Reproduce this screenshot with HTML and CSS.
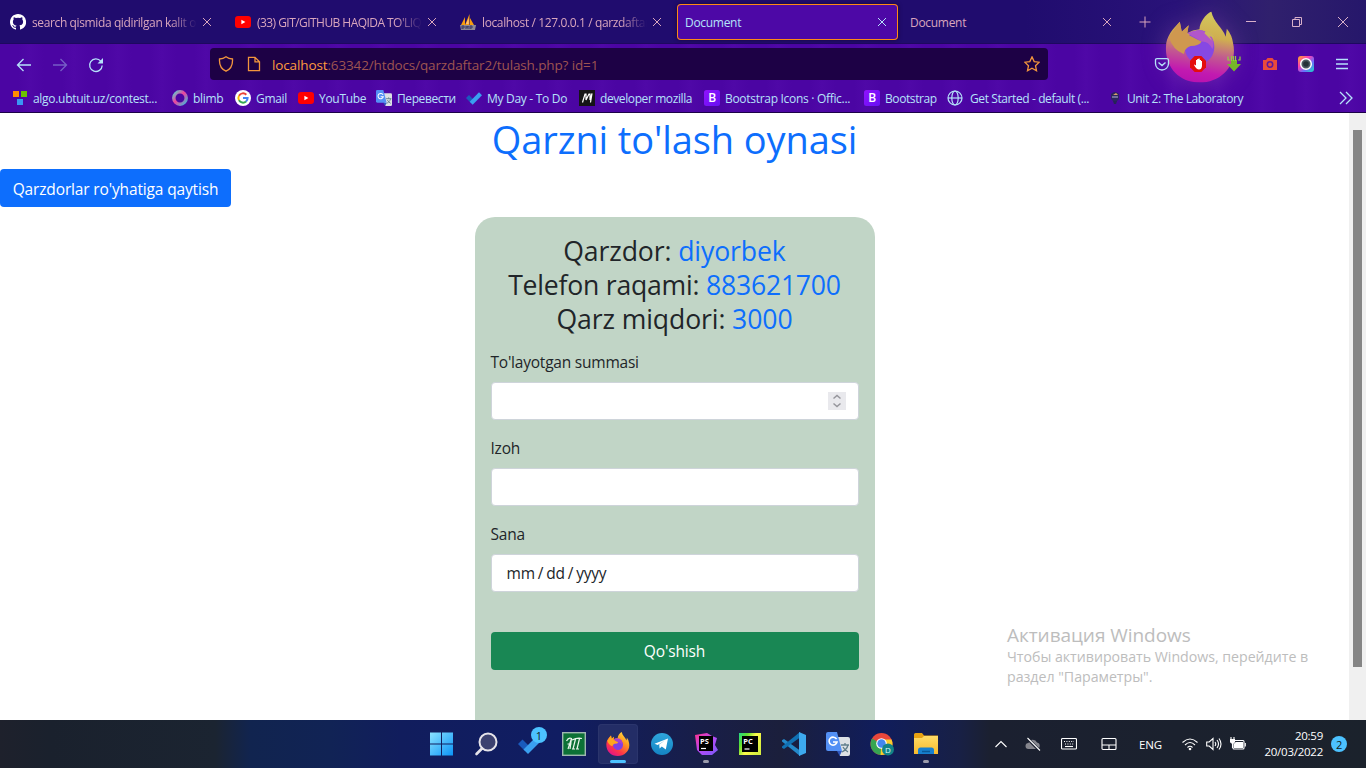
FILE: index.html
```html
<!DOCTYPE html>
<html lang="uz">
<head>
<meta charset="utf-8">
<title>Document</title>
<link rel="stylesheet" href="styles.css">
</head>
<body>
<svg class="defs" width="0" height="0">
  <defs>
    <linearGradient id="fxBody" x1="1" y1="0" x2=".3" y2="1"><stop offset="0" stop-color="#fff44f"/><stop offset=".4" stop-color="#ff9a1f"/><stop offset=".75" stop-color="#ff3647"/><stop offset="1" stop-color="#e31587"/></linearGradient>
    <linearGradient id="fxDim" x1=".6" y1="0" x2=".45" y2="1"><stop offset="0" stop-color="#d3c95d"/><stop offset=".35" stop-color="#cfae50"/><stop offset=".6" stop-color="#c25a90"/><stop offset=".85" stop-color="#c21ab0"/><stop offset="1" stop-color="#b812b0"/></linearGradient>
    <linearGradient id="ring" x1="0" y1="0" x2="1" y2="1"><stop offset="0" stop-color="#5ad0d0"/><stop offset=".45" stop-color="#f0409c"/><stop offset="1" stop-color="#40b8d8"/></linearGradient>
    <linearGradient id="bs" x1="0" y1="0" x2="1" y2="1"><stop offset="0" stop-color="#9013fe"/><stop offset="1" stop-color="#6610f2"/></linearGradient>
    <linearGradient id="win" x1="0" y1="0" x2="1" y2="1"><stop offset="0" stop-color="#8be2ff"/><stop offset="1" stop-color="#0b94f7"/></linearGradient>
    <linearGradient id="ps" x1="0" y1="0" x2="1" y2="1"><stop offset="0" stop-color="#ff318c"/><stop offset=".5" stop-color="#b74af7"/><stop offset="1" stop-color="#765af8"/></linearGradient>
    <linearGradient id="pc" x1="0" y1="0" x2="1" y2=".6"><stop offset="0" stop-color="#21d789"/><stop offset=".3" stop-color="#60e030"/><stop offset=".6" stop-color="#fcf84a"/><stop offset="1" stop-color="#d8ee40"/></linearGradient>
    <linearGradient id="tg" x1="0" y1="0" x2="0" y2="1"><stop offset="0" stop-color="#2fa6dc"/><stop offset="1" stop-color="#1484c4"/></linearGradient>
    <linearGradient id="folder" x1="0" y1="0" x2="0" y2="1"><stop offset="0" stop-color="#ffdc66"/><stop offset="1" stop-color="#f8b92c"/></linearGradient>
    <linearGradient id="rainbow" x1="0" y1="0" x2="1" y2="1"><stop offset="0" stop-color="#ffb020"/><stop offset=".35" stop-color="#ff3fb0"/><stop offset=".65" stop-color="#6a6cff"/><stop offset="1" stop-color="#18e0c0"/></linearGradient>
    <symbol id="x" viewBox="0 0 10 10"><path d="M1 1l8 8M9 1L1 9" fill="none" stroke="currentColor" stroke-width="1"/></symbol>
    <symbol id="yt" viewBox="0 0 16 12"><rect width="16" height="12" rx="3" fill="#f00"/><path d="M6.4 3.7L10.4 6 6.4 8.3z" fill="#fff"/></symbol>
    <symbol id="boot" viewBox="0 0 16 16"><rect width="16" height="16" rx="2.5" fill="url(#bs)"/><text x="8" y="12.4" text-anchor="middle" font-family="Open Sans, sans-serif" font-weight="600" font-size="12" fill="#fff">B</text></symbol>
    <symbol id="check" viewBox="0 0 24 20"><path d="M0 10l4.5-4.5 7 7L7 17z" fill="#195abd"/><path d="M5.5 15.500L19.500 1.500 24 6 10 20z" fill="#3a9ff0"/></symbol>
    <symbol id="fox" viewBox="0 0 72 72"><path d="M15 10.500L17 20.500 24 14 22.500 22Q28 18.500 35 18C35 11 41 3 47 0 49 11 59 17 61.500 25.500L62.700 17.500Q68 24 69 32C74 53 58 72 35 72 14 72 0 56 1 36 1 25 8 18 15 10.500z"/></symbol>
    <symbol id="foxFace" viewBox="0 0 72 72"><path d="M15 10.500L17 20.500 24 14 22.500 23Q28 26 37 30.500 35 35 26 35 20 37 19 43 8 39 4 26 9 18 15 10.500z"/></symbol>
    <symbol id="translate" viewBox="0 0 24 24"><path d="M10 5h12a2 2 0 012 2v15a2 2 0 01-2 2h-8z" fill="#dce0e5"/><path d="M15 13h8M19 11v2M22 13c-1 4-4 6-6 7M17 15c1 2 3 4 5 5" fill="none" stroke="#607d8b" stroke-width="1.3"/><path d="M11 19h5l-2.400 5z" fill="#3057bc"/><path d="M2 0h9l5 19H2a2 2 0 01-2-2V2a2 2 0 012-2z" fill="#5390f5"/><path d="M10.600 7.200A4 4 0 1011 10H7" fill="none" stroke="#fff" stroke-width="1.600"/></symbol>
  </defs>
</svg>

<header class="browser">
  <nav class="tabs">
    <div class="tab"><svg class="ico" viewBox="0 0 16 16" fill="#fff"><path d="M8 0C3.6 0 0 3.6 0 8c0 3.5 2.3 6.5 5.5 7.6.4.1.5-.2.5-.4v-1.5c-2.2.5-2.7-.9-2.7-.9-.4-.9-.9-1.2-.9-1.2-.7-.5.1-.5.1-.5.8.1 1.2.8 1.2.8.7 1.2 1.9.9 2.3.7.1-.5.3-.9.5-1.1-1.8-.2-3.6-.9-3.6-4 0-.9.3-1.6.8-2.1-.1-.2-.4-1 .1-2.1 0 0 .7-.2 2.2.8a7.6 7.6 0 014 0c1.5-1 2.2-.8 2.2-.8.4 1.1.2 1.9.1 2.1.5.6.8 1.300.8 2.100 0 3.100-1.900 3.700-3.700 3.900.3.300.6.800.6 1.500v2.300c0 .2.100.5.600.4A8 8 0 008 0z"/></svg><span class="tab-name fade">search qismida qidirilgan kalit or</span><svg class="close"><use href="#x"/></svg></div>
    <div class="tab"><svg class="ico"><use href="#yt" y="0" width="16" height="16"/></svg><span class="tab-name fade git">(33) GIT/GITHUB HAQIDA TO'LIQ</span><svg class="close"><use href="#x"/></svg></div>
    <div class="tab"><svg class="ico" viewBox="0 0 16 16"><path d="M1 11L5 3v8zM5 11L9.500 0v11zM10 11V4l4 7z" fill="#f89c0e"/><path d="M6 10l2.700-6v6zM2 10l2-4z" fill="#ffc27a"/><path d="M0 11h16l-1 5H1z" fill="#8b8796"/><path d="M2 15v-3h2v2H2m4 1v-3m0 1h2v-1 3m2 0v-3h2v2h-2" stroke="#383866" fill="none"/></svg><span class="tab-name fade">localhost / 127.0.0.1 / qarzdaftar</span><svg class="close"><use href="#x"/></svg></div>
    <div class="tab active"><span class="tab-name">Document</span><svg class="close"><use href="#x"/></svg></div>
    <div class="tab"><span class="tab-name">Document</span><svg class="close"><use href="#x"/></svg></div>
    <svg class="plus" viewBox="0 0 12 12"><path d="M6 .5v11M.5 6h11" stroke="currentColor"/></svg>
    <div class="window-buttons">
      <svg viewBox="0 0 12 12"><path d="M1 5.500h10"/></svg>
      <svg viewBox="0 0 12 12"><path d="M1.500 3.500h7v7h-7zM4 3V1.500h6.500v7H9"/></svg>
      <svg viewBox="0 0 12 12"><path d="M1 1l10 10M11 1L1 11"/></svg>
    </div>
  </nav>
  <svg class="mascot" viewBox="0 0 72 72"><use href="#fox" fill="url(#fxDim)"/><ellipse cx="35" cy="36" rx="15" ry="17" fill="#8648e3"/><path d="M22.500 22Q37 15 47 25 51 33 48 38 44 30 37 30.500z" fill="#b156ca"/><use href="#foxFace" fill="#cf984f"/><path d="M41 20q5-1 9 6l-5-1 3 5-8-8z" fill="#cdb45a"/></svg>
  <div class="toolbar">
    <div class="nav-buttons">
      <svg viewBox="0 0 16 16"><path d="M15 8H1.500M7.500 2l-6 6 6 6"/></svg>
      <svg class="off" viewBox="0 0 16 16"><path d="M1 8h13.500M8.500 2l6 6-6 6"/></svg>
      <svg viewBox="0 0 16 16"><path d="M14.200 8.500A6.300 6.300 0 1 1 12.800 4.200"/><path d="M15 1v5.500H9.500z" fill="currentColor" stroke="none"/></svg>
    </div>
    <div class="url">
      <svg viewBox="0 0 16 16"><path d="M8 .8C6 2.400 3.600 3 1.500 3c-.4 6 2 10.200 6.500 12.200C12.500 13.200 14.900 9 14.500 3 12.400 3 10 2.400 8 .8z"/></svg>
      <svg viewBox="0 0 16 16"><path d="M2.500 1.300h6.500l4.500 4.500v8.900h-11zM9 1.300v4.500h4.500"/></svg>
      <span class="address"><b>localhost</b>:63342/htdocs/qarzdaftar2/tulash.php? id=1</span>
      <svg class="star" viewBox="0 0 16 16"><path d="M8 .9l2.200 4.700 5 .6-3.700 3.500 1 5L8 12.200l-4.500 2.500 1-5L.8 6.200l5-.6z"/></svg>
    </div>
    <div class="addons">
      <svg class="line" viewBox="0 0 16 16"><path d="M3 2.600h10q1.500 0 1.500 1.500V7.500a6.500 6.500 0 01-13 0V4.100q0-1.500 1.500-1.500zM4.500 6.400L8 9.600l3.500-3.200"/></svg>
      <svg viewBox="0 0 16 16"><path d="M4.700 0h6.600L16 4.700v6.600L11.300 16H4.700L0 11.300V4.700z" fill="#e40d0d"/><path d="M4.500 8.500L6 9.500V4h1.200V3h1.300v-.5h1.200V4H11v1h1v5q-.5 3.500-3 3.500T4 9z" fill="#fff"/></svg>
      <svg viewBox="0 0 16 16"><path d="M5 4h6v4h4l-7 7.500L1 8h4z" fill="#76b82a"/><path d="M5.500 0v5M7.500 0v5M9.500 0v5M2 .5v3.500h2M14 .5v3.500h-2" stroke="#8fd03c" fill="none" stroke-width="1.200"/></svg>
      <svg viewBox="0 0 16 16"><path d="M1 4h3l1.500-2h5L12 4h3v10H1z" fill="#e84b3c"/><circle cx="8" cy="8.500" r="2.700" fill="none" stroke="#5b17a0" stroke-width="1.500"/></svg>
      <svg viewBox="0 0 16 16"><rect width="16" height="16" rx="3" fill="url(#rainbow)"/><circle cx="8" cy="8" r="5.300" fill="#4b5961" stroke="#fff" stroke-width="1.500"/><circle cx="8" cy="8" r="2.800" fill="#263238"/></svg>
      <svg class="line" viewBox="0 0 16 16"><path d="M2 3.500h12M2 8h12M2 12.500h12"/></svg>
    </div>
  </div>
  <div class="bookmarks">
    <div class="bm b1"><svg viewBox="0 0 16 16"><path d="M1 1h6v6H1z" fill="#ff8c00"/><path d="M9 1h6v6H9z" fill="#6cc000"/><path d="M5 9h6v6H5z" fill="#3a96f4"/></svg><span>algo.ubtuit.uz/contest...</span></div>
    <div class="bm b2"><svg viewBox="0 0 16 16"><circle cx="8" cy="8" r="6.200" fill="none" stroke="url(#ring)" stroke-width="3.500"/></svg><span>blimb</span></div>
    <div class="bm b3"><svg viewBox="0 0 16 16"><circle cx="8" cy="8" r="8" fill="#fff"/><g fill="none" stroke-width="2"><path d="M11.300 4.700A4.600 4.600 0 004 5.700" stroke="#ea4335"/><path d="M4 5.700a4.600 4.600 0 000 4.600" stroke="#fbbc05"/><path d="M4 10.300a4.600 4.600 0 007 1.200" stroke="#34a853"/><path d="M11 11.500A4.600 4.600 0 0012.600 8H8" stroke="#4285f4"/></g></svg><span>Gmail</span></div>
    <div class="bm b4"><svg viewBox="0 0 16 16"><use href="#yt" y="0" width="16" height="16"/></svg><span>YouTube</span></div>
    <div class="bm b5"><svg><use href="#translate"/></svg><span>Перевести</span></div>
    <div class="bm b6"><svg><use href="#check"/></svg><span>My Day - To Do</span></div>
    <div class="bm b7"><svg viewBox="0 0 16 16"><path fill="#151515" d="M0 0h16v16H0z"/><path d="M3.500 12.500L6 4h1v6l3-6h1v6l2-6.500-1.500 9" fill="none" stroke="#fff" stroke-width="1.200"/></svg><span>developer mozilla</span></div>
    <div class="bm b8"><svg><use href="#boot"/></svg><span>Bootstrap Icons · Offic...</span></div>
    <div class="bm b9"><svg><use href="#boot"/></svg><span>Bootstrap</span></div>
    <div class="bm b10"><svg viewBox="0 0 16 16" fill="none" stroke="#b5e2fa" stroke-width="1.200"><circle cx="8" cy="8" r="7"/><ellipse cx="8" cy="8" rx="3.200" ry="7"/><path d="M1 8h14"/></svg><span>Get Started - default (...</span></div>
    <div class="bm b11"><svg viewBox="0 0 16 16"><path d="M4 4q4-4 8 0v5q-4 5-8 0z" fill="#2c2462"/><path d="M6 5l3-2 2 2z" fill="#d9a06a"/><path d="M5 7h6" stroke="#b5b5d5"/><path d="M6 11h4l-1 3H7z" fill="#252456"/></svg><span>Unit 2: The Laboratory</span></div>
    <svg class="more" viewBox="0 0 14 14"><path d="M1 1l6 6-6 6M7 1l6 6-6 6"/></svg>
  </div>
</header>

<main class="page">
  <div class="content">
    <h1>Qarzni to'lash oynasi</h1>
    <a class="btn back">Qarzdorlar ro'yhatiga qaytish</a>
    <form class="card">
      <h3>Qarzdor: <em>diyorbek</em></h3>
      <h3 class="phone">Telefon raqami: <em>883621700</em></h3>
      <h3>Qarz miqdori: <em>3000</em></h3>
      <div class="fields">
        <label>To'layotgan summasi</label>
        <div class="input number"><svg viewBox="0 0 18 18"><path d="M5.500 6.500L9 3.500l3.500 3M5.500 11.500l3.500 3 3.500-3"/></svg></div>
        <label>Izoh</label>
        <div class="input"></div>
        <label>Sana</label>
        <div class="input date"><span>mm</span><span>/</span><span>dd</span><span>/</span><span>yyyy</span></div>
      </div>
      <div class="btn submit">Qo'shish</div>
    </form>
  </div>
  <div class="scrollbar"><div class="thumb"></div></div>
  <aside class="activation"><p class="title">Активация Windows</p><p>Чтобы активировать Windows, перейдите в</p><p>раздел "Параметры".</p></aside>
</main>

<footer class="taskbar">
  <div class="apps">
    <div class="app"><svg viewBox="0 0 24 24" fill="url(#win)"><path d="M0 .500h11v11H0zM12 .500h11v11H12zM0 12.500h11v11H0zM12 12.500h11v11H12z"/></svg></div>
    <div class="app"><svg viewBox="0 0 24 24"><circle cx="14" cy="10" r="8.500" fill="#3c4170" stroke="#e6e4ea" stroke-width="2"/><path d="M8 16.500L2.500 22" stroke="#e6e4ea" stroke-width="2.600" stroke-linecap="round"/></svg></div>
    <div class="app"><svg class="todo"><use href="#check"/></svg><span class="badge">1</span></div>
    <div class="app"><svg viewBox="0 0 24 24"><rect x=".7" y=".7" width="22.600" height="22.600" fill="#0c7136" stroke="#9eb8b0" stroke-width="1.400"/><path d="M4.500 9q2-4 5-2.500L6 17M9.500 6.500L8 17M5.500 12h4M10 8q5-2.500 10-1.500M13.500 7L11 17M17.500 6.500l-2.500 10.500M10 17h3M14 17h3" fill="none" stroke="#e9f5ec" stroke-width="1.200"/></svg></div>
    <div class="app current"><svg viewBox="0 0 72 72"><use href="#fox" fill="url(#fxBody)"/><ellipse cx="36" cy="38" rx="15" ry="16" fill="#7d3fe6"/><path d="M22.500 22Q37 15 47 25 51 33 48 38 44 30 37 30.500z" fill="#a83fd0"/><use href="#foxFace" fill="#ffa51f"/></svg><i></i></div>
    <div class="app"><svg viewBox="0 0 24 24"><circle cx="12" cy="12" r="11" fill="url(#tg)"/><path d="M4.500 11.800L18 6.500 15.800 17.500l-4-3-2.200 2-.4-4 6-4.300-7.500 4.700z" fill="#fff"/></svg></div>
    <div class="app"><svg viewBox="0 0 24 24"><path d="M1 3l12-2 5 3 5 2-2 7 3 5-6 5H8l-5-5z" fill="url(#ps)"/><path d="M5 4h14v15H5z"/><text x="6" y="11.500" class="ide">PS</text><path d="M7 16.500h5" stroke="#fff" stroke-width="1.200"/></svg><i></i></div>
    <div class="app"><svg viewBox="0 0 24 24"><path d="M1 1h22v22H1z" fill="url(#pc)"/><path d="M4 4h16v16H4z"/><text x="5.200" y="11.800" class="ide">PC</text><path d="M6.500 17h5" stroke="#fff" stroke-width="1.200"/></svg></div>
    <div class="app"><svg viewBox="0 0 24 24"><path d="M0 8.300L2 7 18 18.500V24L0 9.500z" fill="#2489ca"/><path d="M0 15.700L2 17 18 5.500V0L0 14.500z" fill="#1070b3"/><path d="M17 0l7 3v18l-7 3z" fill="#3da9ee"/></svg></div>
    <div class="app"><svg><use href="#translate"/></svg></div>
    <div class="app"><svg viewBox="0 0 24 24"><circle cx="11.500" cy="12" r="11" fill="#e8473b"/><path d="M11.500 12L2 6.500A11 11 0 0011 23z" fill="#36a552"/><path d="M11.500 12l-1 11A11 11 0 0021.500 7.500h-10z" fill="#fbcb2d"/><circle cx="11.500" cy="11.500" r="5.300" fill="#fff"/><circle cx="11.500" cy="11.500" r="4.200" fill="#4286f0"/><circle cx="18" cy="17.500" r="6" fill="#128387"/><text x="18" y="20.500" text-anchor="middle" font-size="8" font-family="Open Sans, sans-serif" fill="#dff">D</text></svg></div>
    <div class="app"><svg viewBox="0 0 24 24"><path d="M0 2.500q0-1.500 1.500-1.500H8l2 2.500H24V12H0z" fill="#e9a210"/><path d="M0 6h8l2-2h14v18H0z" fill="url(#folder)"/><path d="M4 22v-4q0-2.500 2.500-2.500h11Q20 15.500 20 18v4z" fill="#1780d0"/><path d="M8 19.500h8" stroke="#0a5899" stroke-width="1.500"/></svg><i></i></div>
  </div>
  <div class="tray">
    <svg viewBox="0 0 16 16"><path d="M2.500 11L8 5.500l5.500 5.500"/></svg>
    <svg class="t2" viewBox="0 0 16 16"><path d="M3.500 13a3 3 0 010-6 4.500 4.500 0 018.500-.5 3.300 3.300 0 010 6.500z" fill="#85858d" stroke="none"/><path d="M2 2l12.500 12.500" stroke="#1b2030" stroke-width="3"/><path d="M2.500 2L15 14.500"/></svg>
    <svg class="t3" viewBox="0 0 16 16"><rect x=".5" y="2.500" width="15" height="10.500" rx="1"/><path d="M3 5.500h10M4 8h9" stroke-dasharray="1 1.400"/><path d="M4 10.500h8"/></svg>
    <svg class="t4" viewBox="0 0 16 16"><rect x="1" y="2.500" width="14" height="11" rx="1"/><path d="M1 9h14M8 9v4.500"/></svg>
    <span class="lang">ENG</span>
    <svg class="t5" viewBox="0 0 16 16"><path d="M.5 6.500q7.500-7 15 0M3 9q5-5 10 0M5.500 11.500q2.500-2.500 5 0"/><circle cx="8" cy="13" r="1.300" fill="#fff" stroke="none"/></svg>
    <svg class="t6" viewBox="0 0 16 16"><path d="M.7 6h2.500L7 2.500v11L3.200 10H.7zM9 6q1.500 2 0 4M11 4q3 4 0 8M13 2.500q4 5.500 0 11"/></svg>
    <svg class="t7" viewBox="0 0 16 16"><rect x="3" y="4.500" width="11" height="8.500" rx="1"/><path d="M6 6.500h6.500v5h-8V8z" fill="#fff"/><path d="M15.300 7v3.500M1 1v3M4 1v3M2.500 7v5"/><path d="M.5 3.500h4V6l-2 1.500-2-1.500z" fill="#fff"/></svg>
    <div class="clock"><span>20:59</span><span>20/03/2022</span></div>
    <span class="count">2</span>
  </div>
</footer>
</body>
</html>
```
FILE: styles.css
```css
* { box-sizing: border-box; }
body { margin: 0; width: 1366px; height: 768px; overflow: hidden; display: flex; flex-direction: column; font-family: "Open Sans", "Noto Sans", sans-serif; background: #fff; }
.defs { position: absolute; }
svg { display: block; flex: none; }

.browser { position: relative; height: 113px; flex: none; font-size: 12px; letter-spacing: -.3px; color: #b5e2fa; background: repeating-linear-gradient(90deg, #4b05a3 0 18px, #4f08a7 30px, #4b05a3 44px); border-bottom: 1px solid #1c0248; }
.browser > div { position: relative; }
.mascot { position: absolute; left: 1165px; top: 11px; width: 71px; height: 72px; filter: drop-shadow(0 0 12px rgba(200, 120, 200, .3)); }
.tabs { height: 44px; display: flex; align-items: center; gap: 4px; padding-left: 2px; color: #d9a6bd; background: linear-gradient(90deg, #200c6e 0 75%, #291279 86%, #30206d 93%, #26176b 100%); border-bottom: 1px solid #1e0860; }
.tab { width: 221px; height: 36px; display: flex; align-items: center; padding: 0 11px 0 8px; border-radius: 4px; }
.active { color: #b5e2fa; background: #4d08a6; box-shadow: inset 0 0 0 1px #ff8a14, 0 0 4px #18053f; }
.ico { width: 16px; height: 16px; margin-right: 6px; }
.tab-name { flex: 1; white-space: nowrap; overflow: hidden; padding-top: 1px; }
.fade { -webkit-mask-image: linear-gradient(90deg, #000 84%, transparent 100%); mask-image: linear-gradient(90deg, #000 84%, transparent 100%); margin-right: 5px; letter-spacing: -.38px; }
.git { letter-spacing: -.55px; }
.close { width: 10px; height: 10px; }
.plus { width: 12px; height: 12px; margin-left: 12px; }
.window-buttons { display: flex; gap: 34px; margin-left: 90px; }
.window-buttons svg { width: 12px; height: 12px; fill: none; stroke: #d9b1ca; }

.toolbar { height: 40px; display: flex; align-items: center; padding-left: 16px; }
.nav-buttons { display: flex; gap: 20px; width: 194px; }
.nav-buttons svg, .url svg, .addons svg { width: 16px; height: 16px; }
.nav-buttons svg, .line, .more { fill: none; stroke: #b5e2fa; stroke-width: 1.3; }
.nav-buttons svg { position: relative; top: 1px; }
.nav-buttons .off { opacity: .4; }
.url { width: 838px; height: 32px; border-radius: 4px; display: flex; align-items: center; padding: 0 8px; background: #1d0145; }
.url svg { fill: none; stroke: #f2953d; stroke-width: 1.3; margin-right: 12px; }
.url svg + svg { margin-right: 10px; }
.url .star { margin: 0; }
.address { flex: 1; font-size: 13.5px; letter-spacing: -.13px; color: #9d5451; white-space: nowrap; padding-top: 2px; }
.address b { font-weight: 400; color: #ff9b3f; }
.addons { display: flex; gap: 20px; margin-left: 106px; }
.bookmarks { height: 28px; display: flex; align-items: center; padding-left: 12px; }
.bm { display: flex; align-items: center; gap: 5px; white-space: nowrap; }
.bm svg { width: 16px; height: 16px; }
.b1 { width: 160px; } .b2 { width: 63px; } .b3 { width: 63px; } .b4 { width: 78px; }
.b5 { width: 90px; } .b6 { width: 113px; } .b7 { width: 125px; } .b8 { width: 160px; }
.b5 { letter-spacing: -.4px; } .b7, .b9, .b10, .b11 { letter-spacing: -.4px; }
.b9 { width: 83px; } .b10 { width: 160px; gap: 7px; } .b11 { width: 232px; gap: 4px; }
.more { width: 14px; height: 14px; }

.page { position: relative; height: 607px; flex: none; display: flex; overflow: hidden; color: #212529; }
.content { width: 1349px; }
h1 { margin: 2px 0 6px; height: 48px; line-height: 48px; font-size: 38px; letter-spacing: -.1px; font-weight: 400; text-align: center; color: #0d6efd; }
.btn { display: flex; height: 38px; align-items: center; justify-content: center; border-radius: 4px; color: #fff; font-size: 15.5px; letter-spacing: -.15px; white-space: nowrap; }
.back { width: 231px; background: #0d6efd; padding-top: 2px; }
.card { width: 400px; height: 560px; margin: 10px auto 0; padding: 17px 16px; border-radius: 20px; background: #c1d5c6; }
h3 { margin: 0; font-size: 26.6px; letter-spacing: -.1px; font-weight: 400; height: 34px; line-height: 34px; text-align: center; white-space: nowrap; }
h3.phone { letter-spacing: -.22px; }
h3 em { font-style: normal; color: #0d6efd; }
.fields { padding-top: 14px; font-size: 15.5px; letter-spacing: -.22px; }
label { display: block; height: 24px; line-height: 24px; margin-bottom: 8px; }
.input { height: 38px; margin-bottom: 16px; border: 1px solid #ced4da; border-radius: 4px; background: #fff; display: flex; align-items: center; }
.number { justify-content: flex-end; padding-right: 12px; }
.number svg { width: 18px; height: 18px; background: #e9e9ed; fill: none; stroke: #96969c; stroke-width: 1.5; }
.date { padding-left: 15px; gap: 3px; }
.submit { margin-top: 40px; background: #198754; }
.fields .date { margin-bottom: 0; }
.scrollbar { width: 17px; background: #f0f0f0; padding: 17px 4px; }
.thumb { width: 9px; height: 537px; background: #858585; }
.activation { position: absolute; left: 1007px; top: 510px; color: #bdbdbd; font-size: 14.2px; line-height: 20px; letter-spacing: -.02px; white-space: nowrap; }
.activation p { margin: 0; }
.activation .title { font-size: 19px; line-height: 24px; letter-spacing: -.05px; }

.taskbar { position: relative; height: 48px; flex: none; display: flex; color: #fff; background: linear-gradient(90deg, #1e212c 0, #1a212d 50px, #1b2431 215px, #11244f 250px, #112355 330px, #111d5d 400px, #101d62 560px, #181e48 700px, #1b1f3c 780px, #101d5c 880px, #182045 960px, #1b2030 990px, #1b222c 1366px); }
.apps { display: flex; gap: 4px; padding: 4px 0 4px 422px; }
.app { position: relative; width: 40px; height: 40px; border-radius: 4px; display: grid; place-items: center; }
.app svg { width: 24px; height: 24px; }
.current { background: #232d66; box-shadow: inset 0 0 0 1px #2b356c; }
.app .todo { height: 20px; }
.app i { position: absolute; bottom: 1px; left: 17px; width: 6px; height: 3px; border-radius: 2px; background: #9b9cac; }
.current i { width: 16px; left: 12px; background: #4cc2ff; }
.badge, .count { width: 16px; height: 16px; border-radius: 50%; display: grid; place-items: center; font-size: 11px; color: #122; background: #4cc2ff; }
.badge { position: absolute; right: 3px; top: 3px; }
.ide { font: 700 7.500px "Open Sans", sans-serif; fill: #fff; }
.tray { display: flex; align-items: center; padding-left: 47px; font-size: 11.5px; letter-spacing: -.1px; }
.tray svg { width: 16px; height: 16px; fill: none; stroke: #fff; stroke-width: 1.1; }
.t2 { margin-left: 16px; } .t3 { margin-left: 20px; } .t4 { margin-left: 24px; }
.lang { width: 25px; margin-left: 22px; }
.t5 { margin-left: 18px; } .t6 { margin-left: 8px; } .t7 { margin-left: 8px; }
.clock { width: 77px; display: flex; flex-direction: column; align-items: flex-end; line-height: 16px; letter-spacing: -.25px; }
.count { margin-left: 8px; }
```
